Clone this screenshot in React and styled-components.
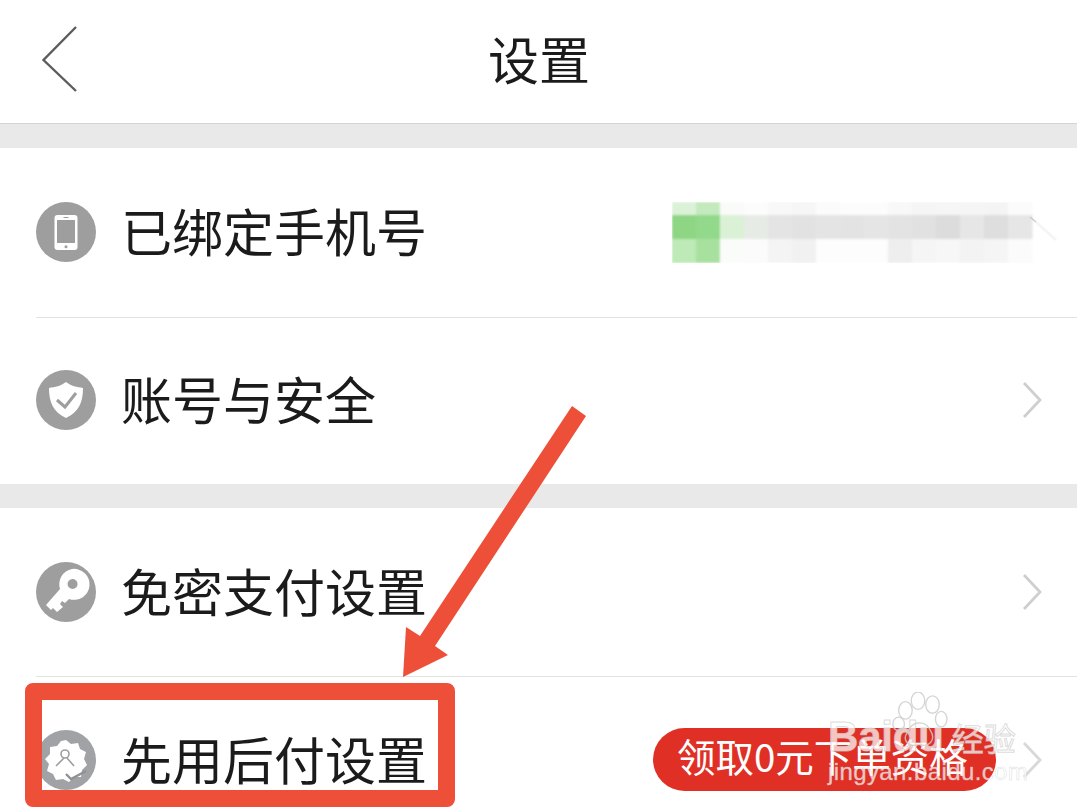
import React from "react";
import styled, { createGlobalStyle } from "styled-components";

const Global = createGlobalStyle`
  html, body { margin: 0; padding: 0; background: #fff; }
  body { font-family: "Noto Sans CJK SC", "Noto Sans", sans-serif; }
`;

const Page = styled.div`
  position: relative;
  width: 1077px;
  height: 807px;
  overflow: hidden;
  background: #fff;
  color: #1b1b1b;
`;

const Header = styled.header`
  height: 123px;
  display: grid;
  grid-template-columns: 1fr auto 1fr;
  align-items: center;
  border-bottom: 1px solid #d4d4d4;
`;

const BackIcon = styled.svg`
  width: 40px;
  height: 70px;
  margin: 0 0 5px 40px;
`;

const Title = styled.h1`
  margin: 0 0 7px 1px;
  font-size: 51px;
  line-height: 60px;
  font-weight: 400;
`;

const Gap = styled.div`
  height: 24px;
  background: #e9e9e9;
`;

const Section = styled.section`
  background: #fff;
`;

const Row = styled.div`
  height: ${(p) => p.$h}px;
  box-sizing: border-box;
  display: flex;
  align-items: center;
  padding: 0 35px ${(p) => p.$pb || 0}px 36px;
`;

const IconCircle = styled.svg`
  width: 60px;
  height: 60px;
  flex: none;
  margin-right: 25px;
`;

const Label = styled.span`
  font-size: 51px;
  line-height: 60px;
  white-space: nowrap;
  margin-bottom: 4px;
`;

const Divider = styled.div`
  height: 1px;
  margin-left: 36px;
  background: #e3e3e3;
`;

const Chevron = styled.svg`
  width: 20px;
  height: 38px;
  flex: none;
  margin-left: ${(p) => (p.$auto ? "auto" : "26px")};
`;

const Mosaic = styled.svg`
  flex: none;
  width: 388px;
  height: 61px;
  margin: 2px -18px 0 auto;
`;

const Promo = styled.div`
  flex: none;
  margin-left: auto;
  width: 343px;
  height: 63px;
  margin-bottom: 2px;
  border-radius: 32px;
  background: #e03026;
  color: #fff;
  font-size: 38.5px;
  line-height: 54px;
  padding-left: 24px;
  box-sizing: border-box;
  white-space: nowrap;
`;

const FrameBox = styled.div`
  position: absolute;
  left: 25px;
  top: 683px;
  width: 430px;
  height: 124px;
  box-sizing: border-box;
  border: 17px solid #ee4f38;
  border-radius: 8px;
`;

const Arrow = styled.svg`
  position: absolute;
  left: 395px;
  top: 400px;
  width: 200px;
  height: 285px;
`;

const Mark = styled.div`
  position: absolute;
  left: 828px;
  top: 692px;
  width: 200px;
  padding-top: 25px;
  display: flex;
  flex-direction: column;
  color: rgba(255, 255, 255, 0.72);
  -webkit-text-stroke: 1px rgba(205, 205, 205, 0.7);
  font-family: "Liberation Sans", sans-serif;
`;

const MarkTop = styled.div`
  display: flex;
  align-items: center;
  gap: 8px;
  height: 40px;
`;

const MarkLogo = styled.span`
  font-size: 42px;
  line-height: 40px;
  font-weight: 700;
  letter-spacing: -0.2px;
`;

const MarkCjk = styled.span`
  font-family: "Noto Sans CJK SC", sans-serif;
  font-size: 32px;
  line-height: 40px;
  white-space: nowrap;
`;

const MarkUrl = styled.span`
  font-size: 24px;
  line-height: 30px;
  letter-spacing: 0.4px;
  white-space: nowrap;
  -webkit-text-stroke: 0.5px rgba(205, 205, 205, 0.7);
`;

const Paw = styled.svg`
  position: absolute;
  left: 60px;
  top: 0;
  width: 60px;
  height: 60px;
`;

const GREY = "#9e9e9e";

const Disc = () => <circle cx="30" cy="30" r="30" fill={GREY} />;

const PhoneIcon = () => (
  <IconCircle viewBox="0 0 60 60">
    <Disc />
    <rect x="18.5" y="13" width="23" height="35" rx="3" fill="#fff" />
    <rect x="21" y="18" width="18" height="23" fill={GREY} />
    <circle cx="30" cy="44.7" r="1.5" fill={GREY} />
    <rect x="27.5" y="15" width="5" height="1" fill={GREY} />
  </IconCircle>
);

const ShieldIcon = () => (
  <IconCircle viewBox="0 0 60 60">
    <Disc />
    <path d="M30 12 C35 16 41 17 47 18 C47 32 43 42 30 48 C17 42 13 32 13 18 C19 17 25 16 30 12Z" fill="#fff" />
    <path d="M21 30 L29 37 L40 23" fill="none" stroke={GREY} strokeWidth="3" />
  </IconCircle>
);

const KeyIcon = () => (
  <IconCircle viewBox="0 0 60 60">
    <Disc />
    <path
      fillRule="evenodd"
      d="M36 7 A15.5 15.5 0 1 1 33 37 L29 41 L26 39 L24 42 L27 45 L21 50 L17 46 L15 48 L10 43 L24 27 A15.5 15.5 0 0 1 36 7Z M36.5 17 A5 5 0 1 0 36.6 27 A5 5 0 1 0 36.5 17Z"
      fill="#fff"
    />
  </IconCircle>
);

const BadgeIcon = () => (
  <IconCircle viewBox="0 0 60 60">
    <circle cx="30" cy="30" r="30" fill="#a0a2a6" />
    <path
      d="M30 10 L35 14 L42 13 L44 19 L50 22 L48 29 L51 35 L46 40 L45 47 L38 47 L33 52 L27 49 L20 50 L17 44 L11 41 L13 34 L9 29 L14 24 L14 17 L21 16 L25 11 Z"
      fill="#fff"
    />
    <circle cx="29" cy="24" r="4" fill="none" stroke={GREY} strokeWidth="1.6" />
    <path d="M28 28 L20 36 M31 28 L38 36" stroke={GREY} strokeWidth="1.6" />
    <path d="M30 44 L35 49 L50 41" fill="none" stroke="#8f9195" strokeWidth="2.4" />
  </IconCircle>
);

const RightArrow = ({ auto, muted }) => (
  <Chevron $auto={auto} viewBox="0 0 20 38">
    <path d="M2 2 L18 19 L2 36" fill="none" stroke={muted ? "#d8d8d8" : "#cfcfcf"} strokeWidth="2.8" />
  </Chevron>
);

const MOSAIC = [
  ["#dcf2d8", "#c3e9bd", "#f9fbf9", "#fcfcfc", "#f8f8f8", "#f6f6f6", "#fbfbfb", "#fcfcfc", "#fcfcfc", "#f8f8f8", "#f5f5f5", "#f6f6f6", "#f5f5f5", "#f4f4f4", "#fbfbfb"],
  ["#8ed684", "#93d98b", "#daf1d6", "#e6ebe6", "#e4e4e4", "#e2e2e2", "#e4e4e4", "#e3e3e3", "#e5e5e5", "#e3e3e3", "#e1e1e1", "#dcdcdc", "#e6e6e6", "#dedede", "#e6e6e6"],
  ["#bdeab6", "#a8e19f", "#fafcfa", "#fbfbfb", "#f4f4f4", "#f1f1f1", "#fdfdfd", "#fdfdfd", "#fdfdfd", "#eeeeee", "#f5f5f5", "#f7f7f7", "#f3f3f3", "#f5f5f5", "#fbfbfb"],
];
const ROW_Y = [0, 13, 37];
const ROW_H = [13, 24, 24];

const PhoneBlur = () => (
  <Mosaic viewBox="0 0 388 61">
    <defs>
      <filter id="soft" x="-5%" y="-5%" width="110%" height="110%">
        <feGaussianBlur stdDeviation="0.9" />
      </filter>
    </defs>
    <g filter="url(#soft)">
      {MOSAIC.map((row, r) =>
        row.map((c, i) => (
          <rect key={`${r}-${i}`} x={i * 24} y={ROW_Y[r]} width="24.5" height={ROW_H[r]} fill={c} />
        ))
      )}
    </g>
    <path d="M358 15 L364 20" stroke="#c9c9c9" strokeWidth="1.4" />
    <path d="M364 20 L384 38" stroke="#f5f5f5" strokeWidth="3" />
  </Mosaic>
);

export default function App() {
  return (
    <Page>
      <Global />
      <Header>
        <BackIcon viewBox="0 0 40 70">
          <path d="M36 3 L3.5 36 L36 67" fill="none" stroke="#5c5c5c" strokeWidth="2.4" />
        </BackIcon>
        <Title>设置</Title>
      </Header>
      <Gap />
      <Section>
        <Row $h={169} $pb={2}>
          <PhoneIcon />
          <Label>已绑定手机号</Label>
          <PhoneBlur />
        </Row>
        <Divider />
        <Row $h={166} $pb={2}>
          <ShieldIcon />
          <Label>账号与安全</Label>
          <RightArrow auto />
        </Row>
      </Section>
      <Gap />
      <Section>
        <Row $h={168}>
          <KeyIcon />
          <Label>免密支付设置</Label>
          <RightArrow auto />
        </Row>
        <Divider />
        <Row $h={166}>
          <BadgeIcon />
          <Label>先用后付设置</Label>
          <Promo>领取0元下单资格</Promo>
          <RightArrow muted />
        </Row>
      </Section>

      <Arrow viewBox="395 400 200 285">
        <path d="M572 406 L586 416 L435 646 L448 655 L403 677 L406 627 L420 636 Z" fill="#ee4f38" />
      </Arrow>
      <FrameBox />
      <Mark>
        <Paw viewBox="0 0 62 62">
          <g fill="none" stroke="rgba(205,205,205,.85)" strokeWidth="1.4">
            <ellipse cx="18" cy="19" rx="7" ry="9" />
            <ellipse cx="31" cy="9" rx="7" ry="9" />
            <ellipse cx="46" cy="13" rx="7" ry="9" />
            <ellipse cx="55" cy="28" rx="6" ry="8" />
            <ellipse cx="11" cy="33" rx="6" ry="7" />
            <path d="M20 42 C24 30 38 28 44 40 C50 50 42 58 32 54 C22 58 14 50 20 42Z" />
          </g>
        </Paw>
        <MarkTop>
          <MarkLogo>Baidu</MarkLogo>
          <MarkCjk>经验</MarkCjk>
        </MarkTop>
        <MarkUrl>jingyan.baidu.com</MarkUrl>
      </Mark>
    </Page>
  );
}
